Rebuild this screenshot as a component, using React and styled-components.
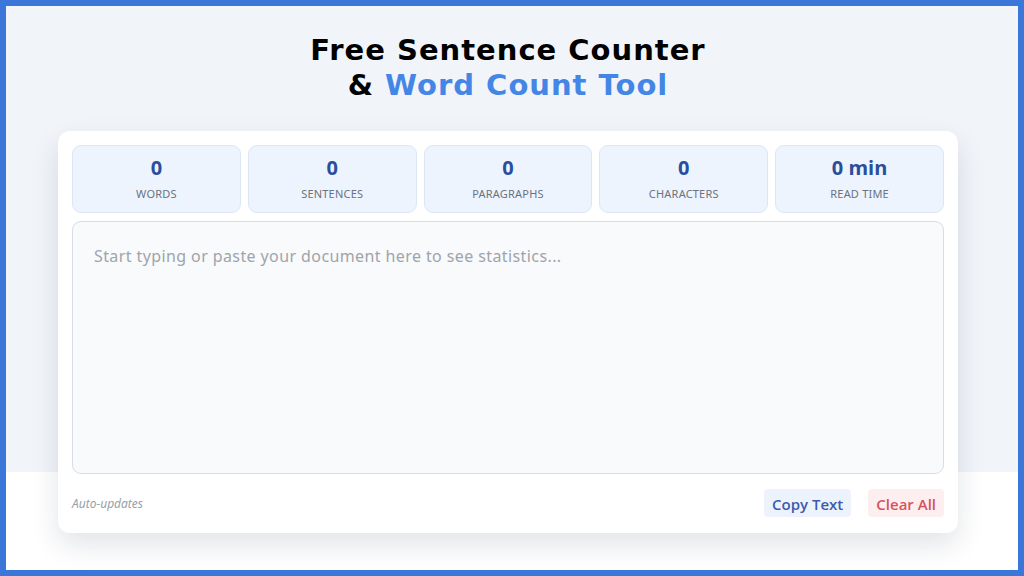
import React from 'react';
import styled, { createGlobalStyle } from 'styled-components';

const GlobalStyle = createGlobalStyle`
  html, body {
    margin: 0;
    padding: 0;
  }
  body {
    font-family: Lato, "Open Sans", sans-serif;
    background: #3a77d8;
  }
`;

const Frame = styled.div`
  box-sizing: border-box;
  width: 1024px;
  height: 576px;
  border: 6px solid #3a77d8;
  background: linear-gradient(to bottom, #f1f4f9 0, #f1f4f9 466px, #ffffff 466px);
  display: flex;
  flex-direction: column;
  align-items: center;
  padding: 27px 8px 0 0;
  overflow: hidden;
`;

const Title = styled.h1`
  margin: 0;
  font-family: "DejaVu Sans", Inter, sans-serif;
  font-weight: 700;
  font-size: 29px;
  line-height: 35px;
  letter-spacing: 1px;
  color: #000;
  text-align: center;
`;

const Accent = styled.span`
  color: #4486e6;
`;

const Card = styled.div`
  box-sizing: border-box;
  margin-top: 28px;
  width: 900px;
  background: #fff;
  border-radius: 12px;
  box-shadow: 0 12px 28px rgba(15, 30, 60, 0.12);
  padding: 14px 14px 16px;
  display: flex;
  flex-direction: column;
  gap: 8px;
`;

const Stats = styled.div`
  display: grid;
  grid-template-columns: repeat(5, 1fr);
  gap: 7px;
`;

const Stat = styled.div`
  height: 68px;
  box-sizing: border-box;
  background: #edf4fe;
  border: 1px solid #dce7f5;
  border-radius: 9px;
  display: flex;
  flex-direction: column;
  align-items: center;
  padding-top: 8px;
`;

const Value = styled.div`
  font-family: "Open Sans", sans-serif;
  font-weight: 700;
  font-size: 20px;
  line-height: 28px;
  color: #2a4e9c;
`;

const Label = styled.div`
  margin-top: 4px;
  font-family: "Noto Sans", sans-serif;
  font-size: 11px;
  letter-spacing: 0.2px;
  color: #6b7280;
  text-transform: uppercase;
`;

const Editor = styled.textarea`
  box-sizing: border-box;
  height: 253px;
  width: 100%;
  resize: none;
  background: #f8fafc;
  border: 1px solid #d6dde6;
  border-radius: 9px;
  padding: 23px 21px;
  font-family: "Noto Sans", sans-serif;
  font-size: 16px;
  letter-spacing: 0.4px;
  color: #333;
  outline: none;
  &::placeholder {
    color: #a0a4aa;
  }
`;

const Footer = styled.div`
  display: flex;
  align-items: center;
  justify-content: space-between;
  padding-top: 7px;
`;

const Note = styled.span`
  font-family: "Noto Sans", sans-serif;
  font-style: italic;
  font-size: 12px;
  color: #9aa0a8;
`;

const Actions = styled.div`
  display: flex;
  gap: 17px;
`;

const ActionButton = styled.button`
  border: none;
  border-radius: 4px;
  padding: 5px 8px;
  height: 28px;
  font-family: "Open Sans", sans-serif;
  font-weight: 600;
  font-size: 15px;
  cursor: pointer;
  background: ${(p) => (p.$danger ? '#fdeff0' : '#edf3fd')};
  color: ${(p) => (p.$danger ? '#d9525a' : '#3b5cae')};
`;

const stats = [
  { value: '0', label: 'Words' },
  { value: '0', label: 'Sentences' },
  { value: '0', label: 'Paragraphs' },
  { value: '0', label: 'Characters' },
  { value: '0 min', label: 'Read Time' },
];

export default function App() {
  return (
    <>
      <GlobalStyle />
      <Frame>
        <Title>
          Free Sentence Counter
          <br />
          &amp; <Accent>Word Count Tool</Accent>
        </Title>
        <Card>
          <Stats>
            {stats.map((s) => (
              <Stat key={s.label}>
                <Value>{s.value}</Value>
                <Label>{s.label}</Label>
              </Stat>
            ))}
          </Stats>
          <Editor placeholder="Start typing or paste your document here to see statistics..." />
          <Footer>
            <Note>Auto-updates</Note>
            <Actions>
              <ActionButton>Copy Text</ActionButton>
              <ActionButton $danger>Clear All</ActionButton>
            </Actions>
          </Footer>
        </Card>
      </Frame>
    </>
  );
}
